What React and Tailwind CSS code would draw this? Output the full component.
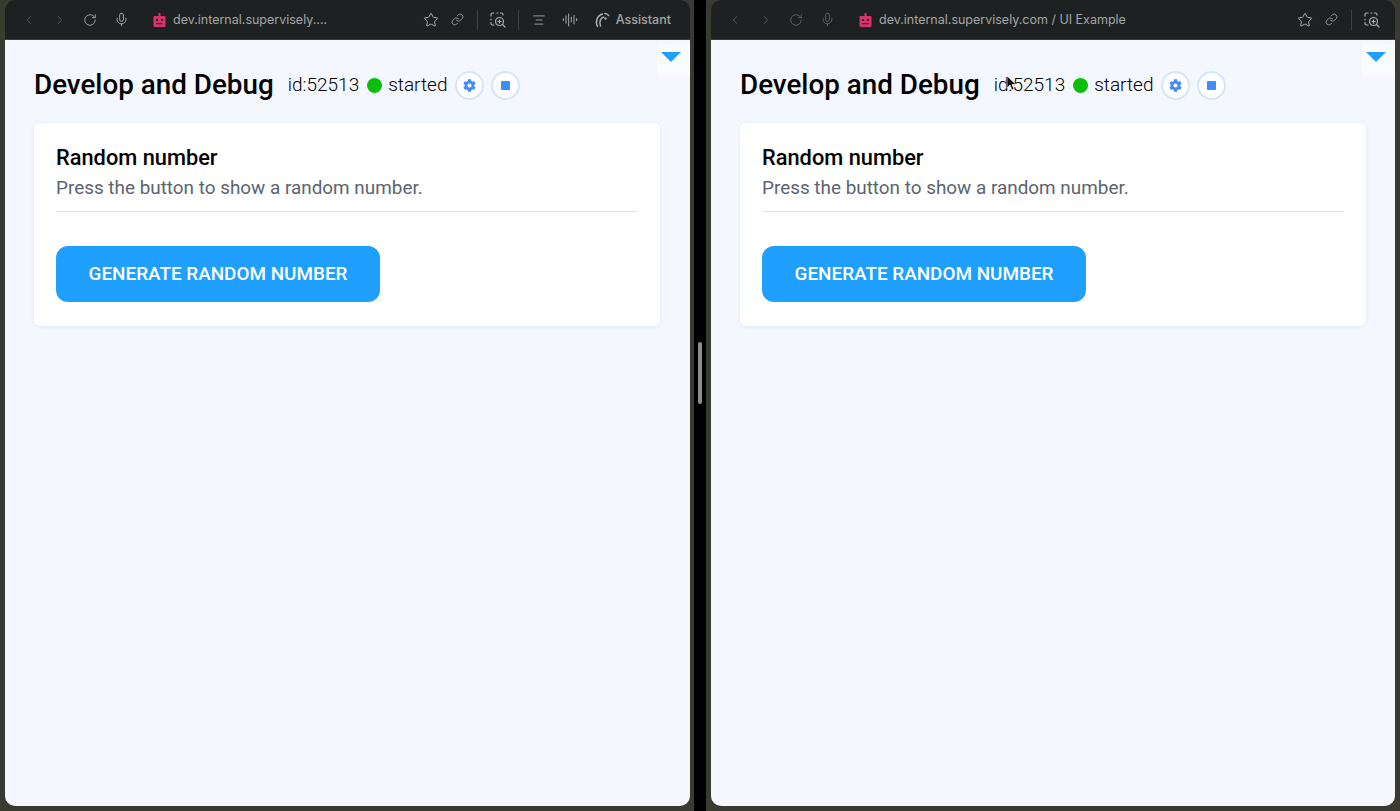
import React from 'react';
import { ChevronLeft, ChevronRight, RotateCw, Mic, Star, Link, AlignCenter, AudioLines } from 'lucide-react';
import { FaCog } from 'react-icons/fa';

// Little pink robot favicon shown in the address bar
const RobotIcon = () => (
    <svg width="13" height="14" viewBox="0 0 13 14" className="shrink-0">
        <rect x="5.500" y="0" width="2" height="3.500" fill="#d6336c" />
        <rect x="0.500" y="3" width="12" height="11" rx="1" fill="#d6336c" />
        <rect x="3" y="6" width="2" height="2" fill="#1e2121" />
        <rect x="8" y="6" width="2" height="2" fill="#1e2121" />
        <rect x="3.500" y="10" width="6" height="1.200" fill="#1e2121" />
    </svg>
);

const AssistantIcon = () => (
    <svg width="16" height="16" viewBox="0 0 16 16" fill="none" stroke="#a9acac" strokeWidth="1.500" strokeLinecap="round">
        <path d="M3.500 14.500C1 10 3 3.500 8.500 2" />
        <path d="M6.500 14C5 10.500 6 6.500 9.500 5" />
        <path d="M11 1.500c1.500.2 2.700.9 3.700 2" />
        <circle cx="11.500" cy="6.500" r="1.200" fill="#a9acac" stroke="none" />
    </svg>
);

// Dashed frame with a zoom glass in the corner
const ScreenSearchIcon = () => (
    <svg width="16" height="16" viewBox="0 0 16 16" fill="none" stroke="#a9acac" strokeWidth="1.200" strokeLinecap="round" className="shrink-0">
        <path d="M1 4V2.500A1.500 1.500 0 0 1 2.500 1H4M7 1h1M10.500 1H11.500A1.500 1.500 0 0 1 13 2.500V3M1 7v1M1 10.500V11.500A1.500 1.500 0 0 0 2.500 13H4" />
        <circle cx="9.500" cy="9.500" r="4" />
        <path d="M12.500 12.500L15 15M9.500 7.800v3.400M7.800 9.500h3.400" />
    </svg>
);

const ToolbarIcon = ({ icon: Icon, size = 15, dim, className = '' }) => (
    <Icon size={size} strokeWidth={1.5} className={`shrink-0 ${dim ? 'text-[#5d6161]' : 'text-[#a9acac]'} ${className}`} />
);

const Toolbar = ({ url, navDim, compact }) => (
    <div className="h-[40px] shrink-0 bg-[#1e2121] border-b border-[#3a3d3d] flex items-center rounded-t-[10px] font-['Inter',sans-serif] text-[12.5px] text-[#a3a6a6]">
        <div className="w-[148px] shrink-0 flex items-center pl-[17px]">
            <ToolbarIcon icon={ChevronLeft} size={14} dim />
            <ToolbarIcon icon={ChevronRight} size={14} dim className="ml-[17px]" />
            <ToolbarIcon icon={RotateCw} size={14} dim={navDim} className="ml-[16px]" />
            <ToolbarIcon icon={Mic} size={15} dim={navDim} className="ml-[17px]" />
        </div>
        <RobotIcon />
        <span className="ml-[7px] pt-[2px] whitespace-nowrap">{url}</span>
        <div className="ml-auto flex items-center">
            <ToolbarIcon icon={Star} size={16} />
            <ToolbarIcon icon={Link} size={13} className="ml-[12px]" />
            <div className="w-px h-5 bg-[#3f4242] ml-[13px]" />
            <span className="ml-[12px]"><ScreenSearchIcon /></span>
            {compact ? (
                <div className="w-[15px]" />
            ) : (
                <>
                    <div className="w-px h-5 bg-[#3f4242] ml-[12px]" />
                    <ToolbarIcon icon={AlignCenter} size={14} className="ml-[13px]" />
                    <ToolbarIcon icon={AudioLines} size={16} className="ml-[16px]" />
                    <span className="ml-[16px]"><AssistantIcon /></span>
                    <span className="ml-[6px] mr-[19px] pt-[2px] font-medium">Assistant</span>
                </>
            )}
        </div>
    </div>
);

const RoundButton = ({ children }) => (
    <button className="w-[29px] h-[29px] rounded-full bg-white border-2 border-[#d5e6fa] flex items-center justify-center text-[#3f8cff]">
        {children}
    </button>
);

const Pane = ({ url, navDim, compact, showCursor, widthClass }) => (
    <div className={`${widthClass} shrink-0 h-[806px] flex flex-col rounded-b-[10px] overflow-hidden`}>
        <Toolbar url={url} navDim={navDim} compact={compact} />
        <div className="relative flex-1 bg-[#f4f7fe] pl-[29px] font-['Roboto',sans-serif]">
            {/* Collapse tab in the corner */}
            <div className="absolute top-[4px] right-0 w-[33px] h-[32px] bg-[#f9fbff] pl-[4px] pt-[8px]">
                <div className="w-0 h-0 border-l-[10px] border-r-[10px] border-t-[10px] border-l-transparent border-r-transparent border-t-[#1f9fff]" />
            </div>

            <div className="flex items-center h-[30px] mt-[30px]">
                <h1 className="text-[27.8px] font-medium text-black whitespace-nowrap">Develop and Debug</h1>
                <span className="relative ml-[14px] text-[19px] font-light text-black">
                    id:52513
                    {showCursor && (
                        <svg width="11" height="16" viewBox="0 0 11 16" className="absolute left-[12px] top-[4px]">
                            <path d="M1 1v12l3-3 2 5 2-1-2-4.500h4z" fill="#111" stroke="#fff" strokeWidth="0.6" />
                        </svg>
                    )}
                </span>
                <div className="w-[15px] h-[15px] rounded-full bg-[#0abf0a] ml-[8px]" />
                <span className="ml-[6px] text-[19px] font-light text-black">started</span>
                <div className="flex items-center gap-[7px] ml-[8px]">
                    <RoundButton><FaCog size={13} /></RoundButton>
                    <RoundButton><div className="w-[9px] h-[9px] rounded-[1px] bg-[#3f8cff]" /></RoundButton>
                </div>
            </div>

            <div className="mt-[23px] w-[626px] bg-white rounded-md shadow-[0_1px_4px_rgba(120,140,190,0.14)] px-[22px] pt-[21px] pb-[24px]">
                <h2 className="text-[21.8px] leading-[27px] font-medium text-black">Random number</h2>
                <p className="text-[18.9px] leading-[27px] text-[#5b6470] mt-[3px]">Press the button to show a random number.</p>
                <div className="h-px bg-[#e2e3e6] mt-[10px]" />
                <button className="mt-[34px] w-[324px] h-[56px] rounded-[12px] bg-[#1f9fff] text-white text-[18.9px] font-medium block">
                    GENERATE RANDOM NUMBER
                </button>
            </div>
        </div>
    </div>
);

const App = () => {
    return (
        <div className="w-[1400px] h-[811px] bg-[#3a3a30] overflow-hidden flex pl-[5px]">
            <Pane url="dev.internal.supervisely...." widthClass="w-[685px]" />
            <div className="w-[21px] shrink-0 h-full pl-[4px]">
                <div className="relative w-[12px] h-full bg-black">
                    <div className="absolute top-[342px] left-[4px] w-[4px] h-[62px] rounded-full bg-[#8e8e8e]" />
                </div>
            </div>
            <Pane url="dev.internal.supervisely.com / UI Example" navDim compact showCursor widthClass="w-[684px]" />
        </div>
    );
};

export default App;
